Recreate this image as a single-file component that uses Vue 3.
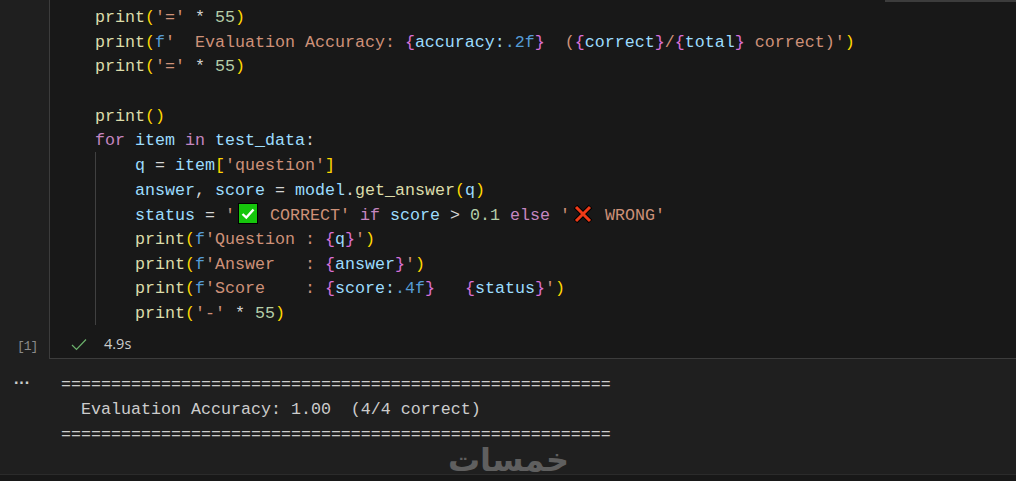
<script setup>
const lines = [
  { i: 0, t: [['f', 'print'], ['b', '('], ['s', "'='"], ['o', ' * '], ['n', '55'], ['b', ')']] },
  { i: 0, t: [['f', 'print'], ['b', '('], ['k', 'f'], ['s', "'  Evaluation Accuracy: "], ['c', '{'], ['v', 'accuracy:'], ['k', '.2f'], ['c', '}'], ['s', '  ('], ['c', '{'], ['v', 'correct'], ['c', '}'], ['s', '/'], ['c', '{'], ['v', 'total'], ['c', '}'], ['s', " correct)'"], ['b', ')']] },
  { i: 0, t: [['f', 'print'], ['b', '('], ['s', "'='"], ['o', ' * '], ['n', '55'], ['b', ')']] },
  { i: 0, t: [] },
  { i: 0, t: [['f', 'print'], ['b', '()']] },
  { i: 0, t: [['p', 'for'], ['v', ' item '], ['p', 'in'], ['v', ' test_data'], ['o', ':']] },
  { i: 1, t: [['v', 'q'], ['o', ' = '], ['v', 'item'], ['b', '['], ['s', "'question'"], ['b', ']']] },
  { i: 1, t: [['v', 'answer'], ['o', ', '], ['v', 'score'], ['o', ' = '], ['v', 'model'], ['o', '.'], ['f', 'get_answer'], ['b', '('], ['v', 'q'], ['b', ')']] },
  { i: 1, t: [['v', 'status'], ['o', ' = '], ['s', "'"], ['yes', ''], ['s', " CORRECT'"], ['o', ' '], ['p', 'if'], ['v', ' score'], ['o', ' > '], ['n', '0.1'], ['o', ' '], ['p', 'else'], ['o', ' '], ['s', "'"], ['no', ''], ['s', " WRONG'"]] },
  { i: 1, t: [['f', 'print'], ['b', '('], ['k', 'f'], ['s', "'Question : "], ['c', '{'], ['v', 'q'], ['c', '}'], ['s', "'"], ['b', ')']] },
  { i: 1, t: [['f', 'print'], ['b', '('], ['k', 'f'], ['s', "'Answer   : "], ['c', '{'], ['v', 'answer'], ['c', '}'], ['s', "'"], ['b', ')']] },
  { i: 1, t: [['f', 'print'], ['b', '('], ['k', 'f'], ['s', "'Score    : "], ['c', '{'], ['v', 'score:'], ['k', '.4f'], ['c', '}'], ['s', '   '], ['c', '{'], ['v', 'status'], ['c', '}'], ['s', "'"], ['b', ')']] },
  { i: 1, t: [['f', 'print'], ['b', '('], ['s', "'-'"], ['o', ' * '], ['n', '55'], ['b', ')']] }
]
const output = ['='.repeat(55), '  Evaluation Accuracy: 1.00  (4/4 correct)', '='.repeat(55)]
</script>

<template>
  <div class="page">
    <div class="topbar"></div>
    <section class="cell">
      <div class="gutter"><span class="count">[1]</span></div>
      <div class="editor">
        <div class="code">
          <div v-for="(line, n) in lines" :key="n" class="line" :class="{ nested: line.i }">
            <template v-for="(tok, m) in line.t" :key="m">
              <span v-if="tok[0] === 'yes'" class="emoji"><svg viewBox="0 0 20 21" width="20" height="21"><rect x="0.5" y="0.5" width="19" height="20" fill="#16c60c" stroke="#000" stroke-width="1"/><path d="M4.5 11l3.8 3.6L15.5 6.5" fill="none" stroke="#fff" stroke-width="2.4"/></svg></span>
              <span v-else-if="tok[0] === 'no'" class="emoji"><svg viewBox="0 0 20 21" width="20" height="21"><path d="M2.5 3.5l15 15M17.5 3.5l-15 15" stroke="#000" stroke-width="5"/><path d="M3 4l14 14M17 4L3 18" stroke="#f03a17" stroke-width="3"/></svg></span>
              <span v-else :class="tok[0]">{{ tok[1] }}</span>
            </template>
          </div>
        </div>
        <div class="status">
          <svg viewBox="0 0 16 16" width="16" height="16"><path d="M1 9l4.5 4.5L15 3.5" fill="none" stroke="#6cb26c" stroke-width="1.2"/></svg>
          <span>4.9s</span>
        </div>
      </div>
    </section>
    <section class="output">
      <div class="more">···</div>
      <pre class="text"><div v-for="(l, n) in output" :key="n">{{ l }}</div></pre>
    </section>
    <div class="mark" dir="rtl">خمسات</div>
    <div class="footer"></div>
  </div>
</template>

<style>
html, body { margin: 0; background: #1f1f1f; overflow: hidden; }
</style>

<style scoped>
.page { position: relative; width: 1016px; height: 481px; background: #1f1f1f; display: flex; flex-direction: column; overflow: hidden; }
.topbar { position: absolute; top: 0; right: 0; width: 131px; height: 2px; background: #3c3c3c; }
.cell { display: flex; height: 359px; flex: none; }
.gutter { width: 49px; flex: none; position: relative; }
.count { position: absolute; top: 339px; left: 17px; font: 13px "Liberation Mono", monospace; letter-spacing: -1px; color: #8a8a8a; }
.editor { flex: 1; background: #181818; border-left: 1px solid #3c3c3c; border-bottom: 1px solid #3c3c3c; padding-left: 45px; display: flex; flex-direction: column; }
.code { padding-top: 6px; font: 16.67px/24.67px "Liberation Mono", monospace; white-space: pre; }
.line { height: 24.67px; }
.nested { padding-left: 40px; position: relative; }
.nested::before { content: ""; position: absolute; left: 0; top: -1.5px; bottom: 1.5px; width: 1px; background: #404040; }
.f { color: #dcdcaa; } .b { color: #ffd700; } .s { color: #ce9178; } .o { color: #d4d4d4; } .n { color: #b5cea8; }
.k { color: #569cd6; } .v { color: #9cdcfe; } .p { color: #c586c0; } .c { color: #da70d6; }
.emoji { display: inline-block; width: 25px; height: 20px; padding-left: 3px; box-sizing: border-box; vertical-align: -4px; }
.status { flex: 1; padding-top: 3px; display: flex; align-items: center; gap: 17px; margin-left: -24px; font: 14.5px "Open Sans", sans-serif; color: #cccccc; }
.output { display: flex; height: 115px; flex: none; }
.more { width: 61px; flex: none; padding: 15px 0 0 14px; box-sizing: border-box; font: bold 16px "Liberation Sans", sans-serif; color: #ccc; }
.text { margin: 14.3px 0 0; font: 16.67px/24.67px "Liberation Mono", monospace; color: #cccccc; }
.mark { position: absolute; left: 446px; top: 447px; width: 125px; text-align: center; font: bold 32px/26px "DejaVu Sans", sans-serif; color: #5f5f5f; }
.footer { height: 6px; background: #181818; border-top: 1px solid #2b2b2b; margin-top: auto; }
</style>
